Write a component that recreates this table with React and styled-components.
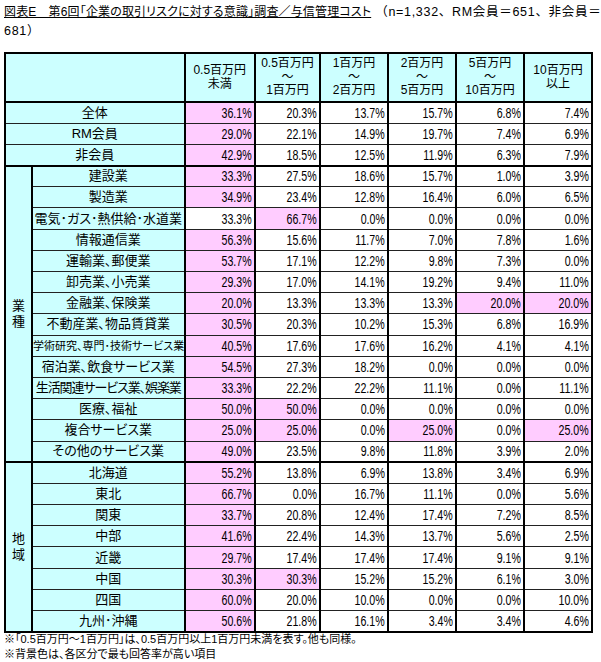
import React from 'react';
import styled, { createGlobalStyle } from 'styled-components';

const GlobalStyle = createGlobalStyle`
  body {
    margin: 0;
    background: #fff;
    color: #000;
    font-family: "Liberation Sans", "Noto Sans CJK JP", sans-serif;
  }
`;

const CYAN = '#ccffff';
const PINK = '#ffccff';

const Page = styled.div`
  width: 601px;
  box-sizing: border-box;
  padding: 3px 2px 0 4px;
`;

const Title = styled.div`
  font-size: 12px;
  line-height: 19px;
  white-space: nowrap;
`;

const Heading = styled.span`
  text-decoration: underline;
  font-feature-settings: "palt";
  letter-spacing: 0.15px;
`;

const Note = styled.span`
  margin-left: ${({ $first }) => ($first ? 4 : 0)}px;
  font-size: 12.5px;
  letter-spacing: 0.7px;
`;

const Table = styled.table`
  margin-top: 11px;
  width: 589px;
  border-collapse: collapse;
  table-layout: fixed;
  border: 2px solid #000;
`;

const Col = styled.col`
  width: ${({ $w }) => $w}px;
`;

const Row = styled.tr`
  height: ${({ $h }) => $h || 21.2}px;
`;

const HeadCell = styled.th`
  background: ${CYAN};
  border: 2px solid #000;
  padding: 0;
  font-weight: normal;
  font-size: 12px;
  line-height: 13.5px;
  text-align: center;
  vertical-align: middle;
`;

const GroupCell = styled.td`
  background: ${CYAN};
  border: 2px solid #000;
  padding: 0;
  font-size: 13px;
  line-height: 16px;
  text-align: center;
  vertical-align: middle;
`;

const LabelCell = styled.td`
  background: ${CYAN};
  border-left: 2px solid #000;
  border-right: 2px solid #000;
  border-top: ${({ $thick }) => ($thick ? '2px solid #000' : '1px solid #222')};
  border-bottom: 1px solid #222;
  padding: 0;
  font-size: ${({ $small }) => ($small ? 11 : 13)}px;
  letter-spacing: ${({ $tight }) => ($tight ? '-1.1px' : '0')};
  font-feature-settings: "palt";
  line-height: 16px;
  text-align: center;
  vertical-align: middle;
  white-space: nowrap;
  overflow: hidden;
`;

const ValueCell = styled.td`
  background: ${({ $pink }) => ($pink ? PINK : '#fff')};
  border-left: 2px solid #000;
  border-right: 2px solid #000;
  border-top: ${({ $thick }) => ($thick ? '2px solid #000' : '1px solid #222')};
  border-bottom: 1px solid #222;
  padding: 0 2px 0 0;
  font-size: 14px;
  line-height: 16px;
  text-align: right;
  vertical-align: middle;
`;

// the reference draws the figures in a tall, narrow face
const Narrow = styled.span`
  display: inline-block;
  transform: scaleX(0.76);
  transform-origin: right center;
`;

const Footer = styled.div`
  margin-top: -1px;
  font-size: 11px;
  line-height: 15px;
  font-feature-settings: "palt";
  white-space: nowrap;
`;

const widths = [27, 152.5, 70.5, 65, 68, 68, 68, 68];

const heads = [
  ['0.5百万円', '未満'],
  ['0.5百万円', '～', '1百万円'],
  ['1百万円', '～', '2百万円'],
  ['2百万円', '～', '5百万円'],
  ['5百万円', '～', '10百万円'],
  ['10百万円', '以上'],
];

const summary = [
  { label: '全体', v: [36.1, 20.3, 13.7, 15.7, 6.8, 7.4], pink: [0] },
  { label: 'RM会員', v: [29.0, 22.1, 14.9, 19.7, 7.4, 6.9], pink: [0] },
  { label: '非会員', v: [42.9, 18.5, 12.5, 11.9, 6.3, 7.9], pink: [0] },
];

const industries = [
  { label: '建設業', v: [33.3, 27.5, 18.6, 15.7, 1.0, 3.9], pink: [0] },
  { label: '製造業', v: [34.9, 23.4, 12.8, 16.4, 6.0, 6.5], pink: [0] },
  { label: '電気･ガス･熱供給･水道業', v: [33.3, 66.7, 0.0, 0.0, 0.0, 0.0], pink: [1] },
  { label: '情報通信業', v: [56.3, 15.6, 11.7, 7.0, 7.8, 1.6], pink: [0] },
  { label: '運輸業、郵便業', v: [53.7, 17.1, 12.2, 9.8, 7.3, 0.0], pink: [0] },
  { label: '卸売業、小売業', v: [29.3, 17.0, 14.1, 19.2, 9.4, 11.0], pink: [0] },
  { label: '金融業、保険業', v: [20.0, 13.3, 13.3, 13.3, 20.0, 20.0], pink: [0, 4, 5] },
  { label: '不動産業、物品賃貸業', v: [30.5, 20.3, 10.2, 15.3, 6.8, 16.9], pink: [0] },
  { label: '学術研究、専門･技術サービス業', v: [40.5, 17.6, 17.6, 16.2, 4.1, 4.1], pink: [0], small: true },
  { label: '宿泊業、飲食サービス業', v: [54.5, 27.3, 18.2, 0.0, 0.0, 0.0], pink: [0] },
  { label: '生活関連サービス業、娯楽業', v: [33.3, 22.2, 22.2, 11.1, 0.0, 11.1], pink: [0], tight: true },
  { label: '医療、福祉', v: [50.0, 50.0, 0.0, 0.0, 0.0, 0.0], pink: [0, 1] },
  { label: '複合サービス業', v: [25.0, 25.0, 0.0, 25.0, 0.0, 25.0], pink: [0, 1, 3, 5] },
  { label: 'その他のサービス業', v: [49.0, 23.5, 9.8, 11.8, 3.9, 2.0], pink: [0] },
];

const regions = [
  { label: '北海道', v: [55.2, 13.8, 6.9, 13.8, 3.4, 6.9], pink: [0] },
  { label: '東北', v: [66.7, 0.0, 16.7, 11.1, 0.0, 5.6], pink: [0] },
  { label: '関東', v: [33.7, 20.8, 12.4, 17.4, 7.2, 8.5], pink: [0] },
  { label: '中部', v: [41.6, 22.4, 14.3, 13.7, 5.6, 2.5], pink: [0] },
  { label: '近畿', v: [29.7, 17.4, 17.4, 17.4, 9.1, 9.1], pink: [0] },
  { label: '中国', v: [30.3, 30.3, 15.2, 15.2, 6.1, 3.0], pink: [0, 1] },
  { label: '四国', v: [60.0, 20.0, 10.0, 0.0, 0.0, 10.0], pink: [0] },
  { label: '九州･沖縄', v: [50.6, 21.8, 16.1, 3.4, 3.4, 4.6], pink: [0] },
];

// the six percentage cells of one row
function Values({ row, thick }) {
  return row.v.map((n, i) => (
    <ValueCell key={i} $pink={row.pink.includes(i)} $thick={thick}>
      <Narrow>{n.toFixed(1)}%</Narrow>
    </ValueCell>
  ));
}

function Group({ name, rows }) {
  return rows.map((row, i) => (
    <Row key={row.label}>
      {i === 0 && (
        <GroupCell rowSpan={rows.length}>
          {name[0]}
          <br />
          {name[1]}
        </GroupCell>
      )}
      <LabelCell $thick={i === 0} $small={row.small} $tight={row.tight}>
        {row.label}
      </LabelCell>
      <Values row={row} thick={i === 0} />
    </Row>
  ));
}

export default function App() {
  return (
    <Page>
      <GlobalStyle />
      <Title>
        <Heading>図表E　第6回「企業の取引リスクに対する意識」調査／与信管理コスト</Heading>
        <Note $first>（n=1,332、RM会員＝651、非会員＝</Note>
        <br />
        <Note>681）</Note>
      </Title>

      <Table>
        <colgroup>
          {widths.map((w, i) => (
            <Col key={i} $w={w} />
          ))}
        </colgroup>
        <tbody>
          <Row $h={49}>
            <HeadCell colSpan={2} />
            {heads.map((lines, i) => (
              <HeadCell key={i}>
                {lines.map((t, j) => (
                  <div key={j}>{t}</div>
                ))}
              </HeadCell>
            ))}
          </Row>

          {summary.map((row, i) => (
            <Row key={row.label}>
              <LabelCell colSpan={2} $thick={i === 0}>
                {row.label}
              </LabelCell>
              <Values row={row} thick={i === 0} />
            </Row>
          ))}

          <Group name="業種" rows={industries} />
          <Group name="地域" rows={regions} />
        </tbody>
      </Table>

      <Footer>
        ※「0.5百万円～1百万円」は、0.5百万円以上1百万円未満を表す。他も同様。
        <br />
        ※背景色は、各区分で最も回答率が高い項目
      </Footer>
    </Page>
  );
}
